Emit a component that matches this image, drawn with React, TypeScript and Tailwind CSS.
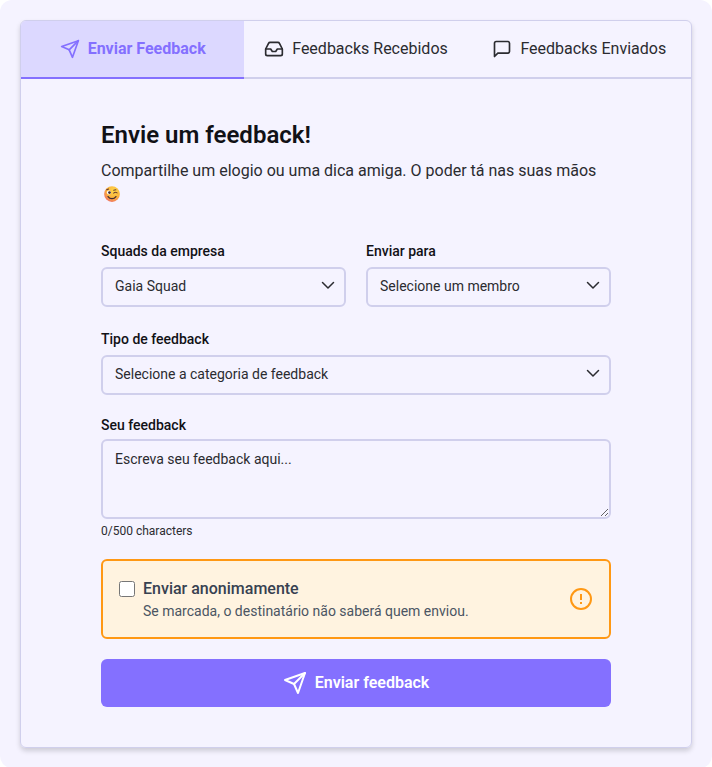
import { useState } from "react";
import type { ReactNode } from "react";
import { Inbox } from "lucide-react";

function SendIcon({ className }: { className: string }) {
  return (
    <svg viewBox="0 0 24 24" fill="none" stroke="currentColor" strokeWidth="2" strokeLinecap="round" strokeLinejoin="round" className={className} aria-hidden="true">
      <path d="m22 2-7 20-4-9-9-4Z" />
      <path d="M22 2 11 13" />
    </svg>
  );
}

function MessageIcon({ className }: { className: string }) {
  return (
    <svg viewBox="0 0 24 24" fill="none" stroke="currentColor" strokeWidth="2" strokeLinecap="round" strokeLinejoin="round" className={className} aria-hidden="true">
      <path d="M21 15a2 2 0 0 1-2 2H7l-4 4V5a2 2 0 0 1 2-2h14a2 2 0 0 1 2 2z" />
    </svg>
  );
}

function WinkIcon() {
  return (
    <svg viewBox="0 0 32 32" className="ml-0.5 inline-block size-[18px] align-[-3px]" role="img" aria-label="Piscadela">
      <defs>
        <radialGradient id="face" cx="0.62" cy="0.3" r="0.75">
          <stop offset="0" stopColor="#ffd84a" />
          <stop offset="0.6" stopColor="#fbb23c" />
          <stop offset="1" stopColor="#ee6f63" />
        </radialGradient>
      </defs>
      <circle cx="16" cy="16" r="14" fill="url(#face)" />
      <circle cx="10.5" cy="13.5" r="3.6" fill="#fff" />
      <circle cx="11.5" cy="13.5" r="2.4" fill="#402a32" />
      <path d="M19 14.5c2-2 4-2 6-.5M19 9.500l4-1M6.500 8.500 10 7" fill="none" stroke="#6a3d30" strokeWidth="1.800" strokeLinecap="round" />
      <path d="M9 20.500c3.500 5 10.500 5 14 0" fill="none" stroke="#402a32" strokeWidth="2.200" strokeLinecap="round" />
    </svg>
  );
}

function WarningIcon() {
  return (
    <svg viewBox="0 0 24 24" fill="none" stroke="#ff9814" strokeWidth="2" className="size-6 shrink-0" aria-hidden="true">
      <circle cx="12" cy="12" r="10" />
      <path d="M12 7v6M12 15v2" />
    </svg>
  );
}

const tabs = [
  { label: "Enviar Feedback", icon: <SendIcon className="size-5 shrink-0" /> },
  { label: "Feedbacks Recebidos", icon: <Inbox className="size-5 shrink-0" aria-hidden="true" /> },
  { label: "Feedbacks Enviados", icon: <MessageIcon className="size-5 shrink-0" /> },
];

function SelectField({ id, label, children }: { id: string; label: string; children: ReactNode }) {
  return (
    <div className="flex flex-col gap-1.5">
      <label htmlFor={id} className="text-sm font-medium text-[#111116]">{label}</label>
      <div className="relative">
        <select id={id} className="h-10 w-full appearance-none rounded-md border-2 border-[#d0cfec] bg-transparent pr-9 pb-0.5 pl-3 text-sm text-[#2b2b30] outline-none focus:border-[#8470ff]">
          {children}
        </select>
        <svg viewBox="0 0 16 16" fill="none" stroke="#2b2b30" strokeWidth="1.5" strokeLinecap="round" strokeLinejoin="round" className="pointer-events-none absolute top-2.5 right-2.5 size-4" aria-hidden="true">
          <path d="m2.500 5.500 5.500 5.500 5.500-5.500" />
        </svg>
      </div>
    </div>
  );
}

export default function App() {
  const [active, setActive] = useState(0);
  const [message, setMessage] = useState("");
  const [anonymous, setAnonymous] = useState(false);

  return (
    <div className="min-h-screen rounded-xl bg-[#f5f3ff] p-5 font-['Roboto',sans-serif] text-[#2b2b30]">
      <main className="overflow-hidden rounded-md border border-[#d0cfec] shadow-[0_3px_5px_rgba(0,0,0,0.16)]">
        <div role="tablist" className="grid grid-cols-3">
          {tabs.map((tab, i) => (
            <button
              key={tab.label}
              type="button"
              role="tab"
              aria-selected={active === i}
              onClick={() => setActive(i)}
              className={
                active === i
                  ? "flex items-center justify-center gap-2 border-b-2 border-[#8470ff] bg-[#dcd8ff] py-4 font-bold text-[#8470ff]"
                  : "flex items-center justify-center gap-2 border-b-2 border-[#d0cfec] py-4"
              }
            >
              {tab.icon}
              <span className="whitespace-nowrap">{tab.label}</span>
            </button>
          ))}
        </div>

        <form className="flex flex-col px-20 py-10" onSubmit={(e) => e.preventDefault()}>
          <h1 className="text-2xl font-semibold text-[#111116]">Envie um feedback!</h1>
          <p className="mt-2">
            Compartilhe um elogio ou uma dica amiga. O poder tá nas suas mãos <WinkIcon />
          </p>

          <div className="mt-[34px] grid grid-cols-2 gap-5">
            <SelectField id="squad" label="Squads da empresa">
              <option>Gaia Squad</option>
            </SelectField>
            <SelectField id="member" label="Enviar para">
              <option>Selecione um membro</option>
            </SelectField>
          </div>

          <div className="mt-[22px]">
            <SelectField id="category" label="Tipo de feedback">
              <option>Selecione a categoria de feedback</option>
            </SelectField>
          </div>

          <div className="mt-5 flex flex-col">
            <label htmlFor="message" className="text-sm font-medium text-[#111116]">Seu feedback</label>
            <textarea
              id="message"
              value={message}
              maxLength={500}
              onChange={(e) => setMessage(e.target.value)}
              placeholder="Escreva seu feedback aqui..."
              className="mt-1 h-20 w-full rounded-md border-2 border-[#d0cfec] px-3 py-2 text-sm outline-none placeholder:text-[#2b2b30] focus:border-[#8470ff]"
            />
            <p className="mt-1 text-xs">{message.length}/500 characters</p>
          </div>

          <div className="mt-5 flex h-20 items-center justify-between rounded-md border-2 border-[#ff9814] bg-[#fff3e0] px-4">
            <div className="flex gap-2">
              <input
                id="anonymous"
                type="checkbox"
                checked={anonymous}
                onChange={(e) => setAnonymous(e.target.checked)}
                aria-describedby="anonymous-hint"
                className="mt-1 size-4 shrink-0"
              />
              <div>
                <label htmlFor="anonymous" className="block font-medium text-[#374151]">Enviar anonimamente</label>
                <p id="anonymous-hint" className="text-sm text-[#4b5563]">Se marcada, o destinatário não saberá quem enviou.</p>
              </div>
            </div>
            <WarningIcon />
          </div>

          <button type="submit" className="mt-5 flex h-12 items-center justify-center gap-2 rounded-md bg-[#8470ff] font-semibold text-white">
            <SendIcon className="size-6" />
            Enviar feedback
          </button>
        </form>
      </main>
    </div>
  );
}
